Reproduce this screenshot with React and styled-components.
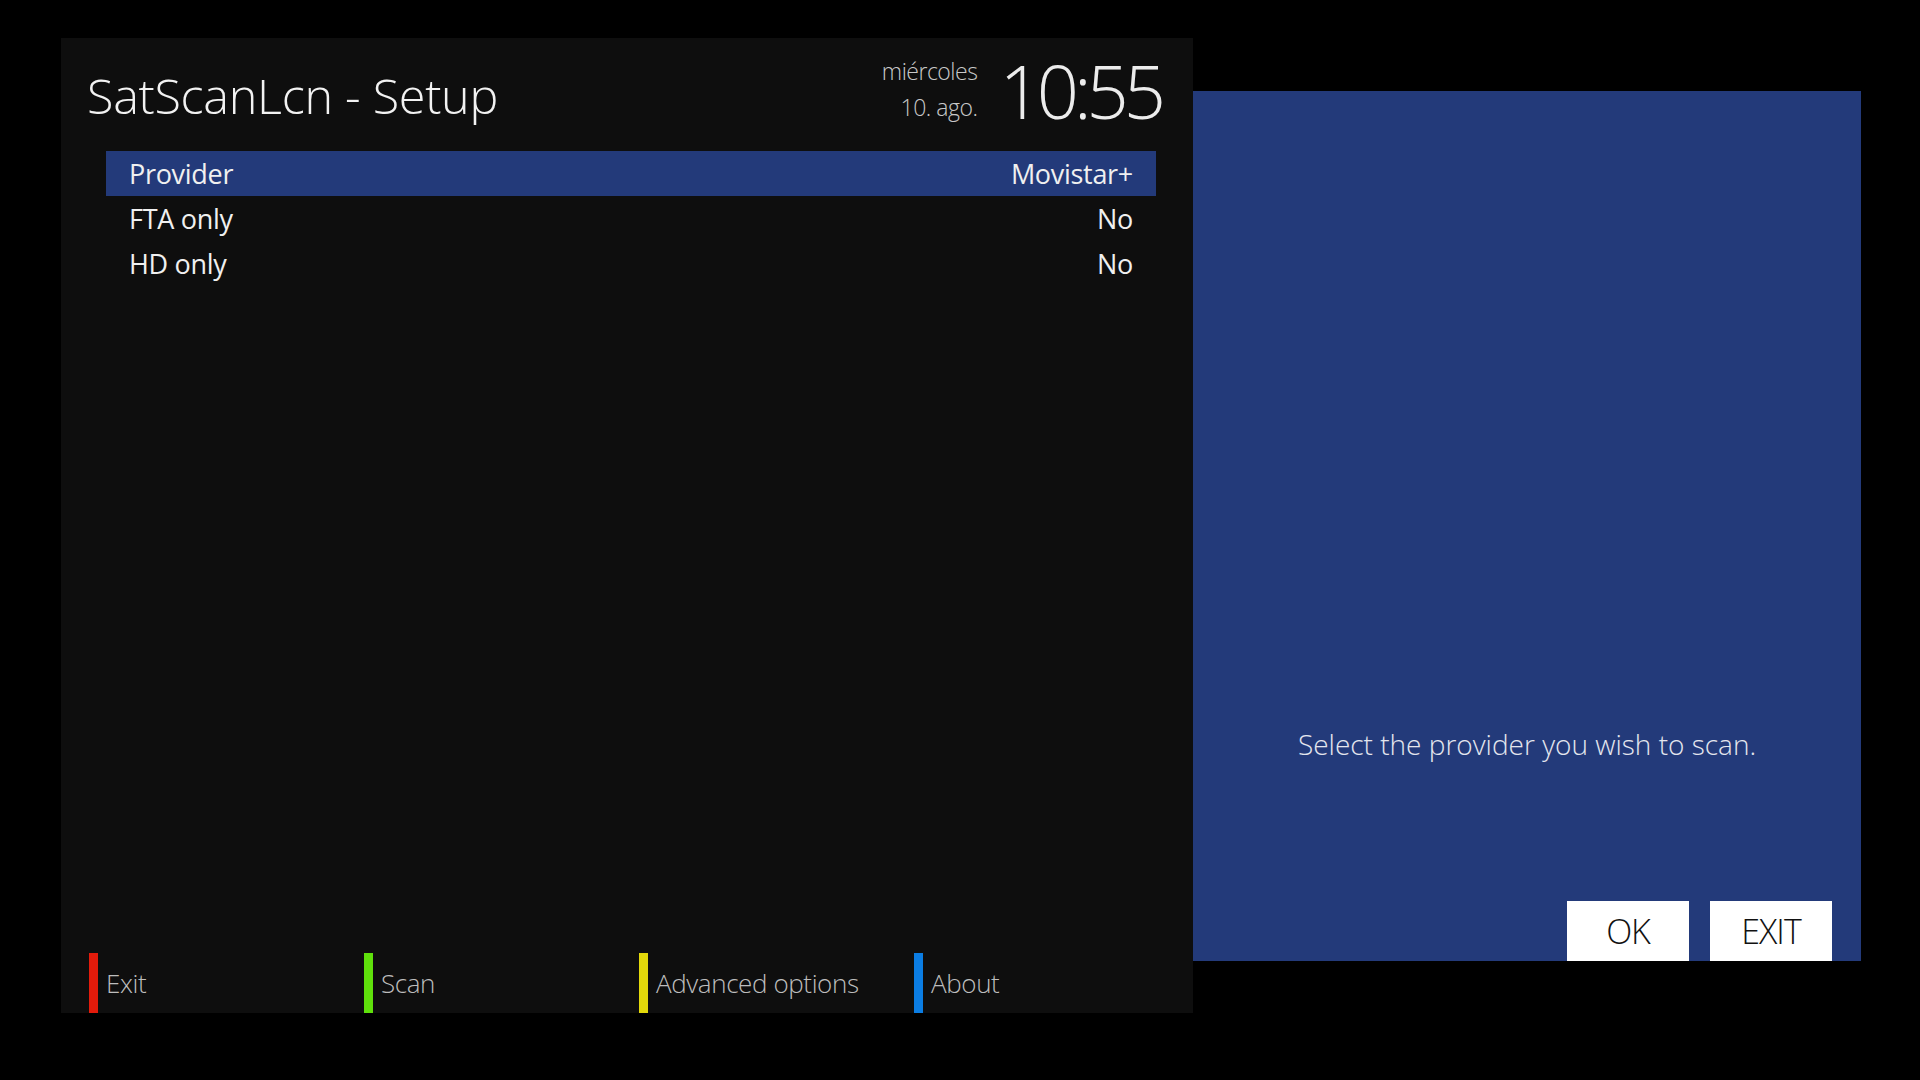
import React from 'react';
import styled, { createGlobalStyle } from 'styled-components';

const GlobalStyle = createGlobalStyle`
  html, body {
    margin: 0;
    padding: 0;
    background: #000;
  }
  body {
    font-family: "Open Sans", "Noto Sans", "Liberation Sans", sans-serif;
    color: #fff;
  }
`;

const Screen = styled.div`
  width: 1920px;
  height: 1080px;
  display: flex;
  align-items: flex-start;
  padding: 38px 0 0 61px;
  box-sizing: border-box;
  background: #000;
  overflow: hidden;
`;

const SetupPanel = styled.div`
  width: 1132px;
  height: 975px;
  background: #0e0e0e;
  display: flex;
  flex-direction: column;
`;

const Header = styled.div`
  height: 113px;
  display: flex;
  align-items: center;
  justify-content: space-between;
  padding: 0 32px 0 26px;
`;

const Title = styled.h1`
  margin: 0;
  font-size: 48.5px;
  font-weight: 300;
  color: #f2f2f2;
  letter-spacing: -0.3px;
`;

const Clock = styled.div`
  display: flex;
  align-items: center;
  gap: 22px;
  margin-top: -8px;
`;

const DateBox = styled.div`
  text-align: right;
  font-size: 23px;
  font-weight: 300;
  line-height: 36px;
  color: #c8c8c8;
  letter-spacing: -0.5px;
  margin-top: -4px;
`;

const Time = styled.div`
  font-size: 74px;
  font-weight: 300;
  line-height: 1;
  color: #ececec;
  letter-spacing: -5px;
`;

const List = styled.div`
  margin: 0 37px 0 45px;
  display: flex;
  flex-direction: column;
`;

const Row = styled.div`
  height: 45px;
  display: flex;
  align-items: center;
  justify-content: space-between;
  padding: 0 23px;
  font-size: 27px;
  color: #f0f0f0;
  letter-spacing: -0.3px;
  background: ${(p) => (p.$selected ? '#233a7a' : 'transparent')};
`;

const Footer = styled.div`
  margin-top: auto;
  height: 60px;
  display: flex;
  padding-left: 28px;
`;

const Key = styled.div`
  width: 275px;
  display: flex;
  align-items: center;
  gap: 8px;
  font-size: 26px;
  font-weight: 300;
  color: #bdbdbd;
  letter-spacing: -0.4px;
`;

const KeyBar = styled.span`
  width: 9px;
  align-self: stretch;
  background: ${(p) => p.$color};
`;

const HelpPanel = styled.div`
  margin-top: 53px;
  width: 668px;
  height: 870px;
  background: #233a7a;
  display: flex;
  flex-direction: column;
  justify-content: flex-end;
`;

const Message = styled.div`
  text-align: center;
  font-size: 28px;
  font-weight: 300;
  line-height: 40px;
  color: #e4e6ee;
  margin-bottom: 137px;
`;

const Buttons = styled.div`
  display: flex;
  justify-content: flex-end;
  gap: 21px;
  padding-right: 29px;
`;

const Button = styled.div`
  width: 122px;
  height: 60px;
  background: #fff;
  color: #111;
  display: flex;
  align-items: center;
  justify-content: center;
  font-size: 34px;
  font-weight: 300;
  letter-spacing: -1px;
`;

const rows = [
  { label: 'Provider', value: 'Movistar+', selected: true },
  { label: 'FTA only', value: 'No' },
  { label: 'HD only', value: 'No' },
];

const keys = [
  { label: 'Exit', color: '#e31b0b' },
  { label: 'Scan', color: '#5fe00b' },
  { label: 'Advanced options', color: '#e3d90b' },
  { label: 'About', color: '#0b7de3' },
];

export default function App() {
  return (
    <>
      <GlobalStyle />
      <Screen>
        <SetupPanel>
          <Header>
            <Title>SatScanLcn - Setup</Title>
            <Clock>
              <DateBox>
                <div>miércoles</div>
                <div>10. ago.</div>
              </DateBox>
              <Time>10:55</Time>
            </Clock>
          </Header>
          <List>
            {rows.map((r) => (
              <Row key={r.label} $selected={r.selected}>
                <span>{r.label}</span>
                <span>{r.value}</span>
              </Row>
            ))}
          </List>
          <Footer>
            {keys.map((k) => (
              <Key key={k.label}>
                <KeyBar $color={k.color} />
                <span>{k.label}</span>
              </Key>
            ))}
          </Footer>
        </SetupPanel>
        <HelpPanel>
          <Message>Select the provider you wish to scan.</Message>
          <Buttons>
            <Button>OK</Button>
            <Button>EXIT</Button>
          </Buttons>
        </HelpPanel>
      </Screen>
    </>
  );
}
